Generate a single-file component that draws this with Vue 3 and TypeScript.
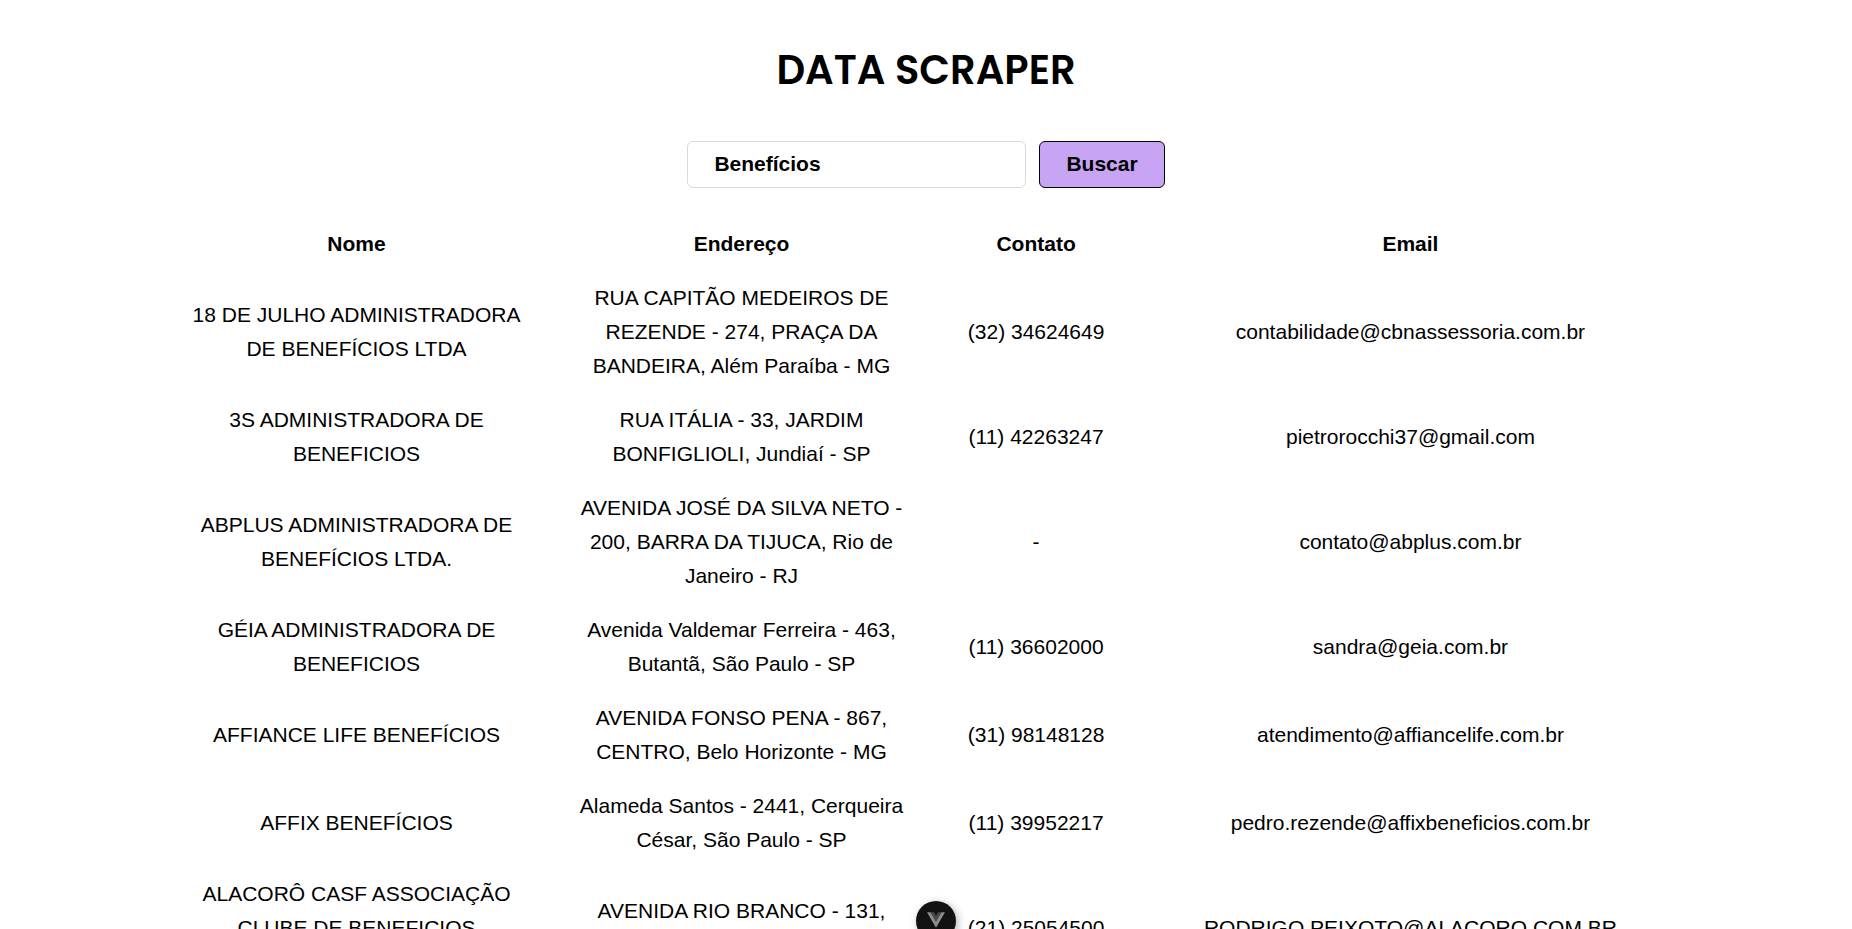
<script setup lang="ts">
import { ref } from 'vue'

interface Company {
  name: string
  address: string
  phone: string
  email: string
}

const query = ref('Benefícios')

const companies = ref<Company[]>([
  {
    name: '18 DE JULHO ADMINISTRADORA DE BENEFÍCIOS LTDA',
    address: 'RUA CAPITÃO MEDEIROS DE REZENDE - 274, PRAÇA DA BANDEIRA, Além Paraíba - MG',
    phone: '(32) 34624649',
    email: 'contabilidade@cbnassessoria.com.br',
  },
  {
    name: '3S ADMINISTRADORA DE BENEFICIOS',
    address: 'RUA ITÁLIA - 33, JARDIM BONFIGLIOLI, Jundiaí - SP',
    phone: '(11) 42263247',
    email: 'pietrorocchi37@gmail.com',
  },
  {
    name: 'ABPLUS ADMINISTRADORA DE BENEFÍCIOS LTDA.',
    address: 'AVENIDA JOSÉ DA SILVA NETO - 200, BARRA DA TIJUCA, Rio de Janeiro - RJ',
    phone: '-',
    email: 'contato@abplus.com.br',
  },
  {
    name: 'GÉIA ADMINISTRADORA DE BENEFICIOS',
    address: 'Avenida Valdemar Ferreira - 463, Butantã, São Paulo - SP',
    phone: '(11) 36602000',
    email: 'sandra@geia.com.br',
  },
  {
    name: 'AFFIANCE LIFE BENEFÍCIOS',
    address: 'AVENIDA FONSO PENA - 867, CENTRO, Belo Horizonte - MG',
    phone: '(31) 98148128',
    email: 'atendimento@affiancelife.com.br',
  },
  {
    name: 'AFFIX BENEFÍCIOS',
    address: 'Alameda Santos - 2441, Cerqueira César, São Paulo - SP',
    phone: '(11) 39952217',
    email: 'pedro.rezende@affixbeneficios.com.br',
  },
  {
    name: 'ALACORÔ CASF ASSOCIAÇÃO CLUBE DE BENEFICIOS COMPARTILHADOS',
    address: 'AVENIDA RIO BRANCO - 131, CENTRO, Rio de Janeiro - RJ',
    phone: '(21) 25054500',
    email: 'RODRIGO.PEIXOTO@ALACORO.COM.BR',
  },
])
</script>

<template>
  <main class="page">
    <h1 class="title">DATA SCRAPER</h1>

    <form class="search" @submit.prevent>
      <input v-model="query" class="search-input" type="text" aria-label="Buscar por nome" />
      <button class="search-button" type="submit">Buscar</button>
    </form>

    <table class="results">
      <colgroup>
        <col class="col-name" />
        <col class="col-address" />
        <col class="col-phone" />
        <col />
      </colgroup>
      <thead>
        <tr>
          <th scope="col">Nome</th>
          <th scope="col">Endereço</th>
          <th scope="col">Contato</th>
          <th scope="col">Email</th>
        </tr>
      </thead>
      <tbody>
        <tr v-for="company in companies" :key="company.name">
          <td>{{ company.name }}</td>
          <td>{{ company.address }}</td>
          <td>{{ company.phone }}</td>
          <td>{{ company.email }}</td>
        </tr>
      </tbody>
    </table>

    <button class="devtools" type="button" aria-label="Vue DevTools">
      <svg viewBox="0 0 256 221" width="18" height="16" aria-hidden="true">
        <path fill="#8c8c8c" d="m0 0 128 220.8L256 0h-51.2L128 132.48 50.56 0H0Z" />
        <path fill="#4a4a4a" d="M50.56 0 128 133.12 204.8 0h-47.36L128 51.2 97.92 0H50.56Z" />
      </svg>
    </button>
  </main>
</template>

<style>
body {
  margin: 0;
  background: #fff;
}
</style>

<style scoped>
.page {
  display: flex;
  flex-direction: column;
  align-items: center;
  padding: 40px 0;
  color: #000;
  font-family: Arial, "Liberation Sans", sans-serif;
  font-size: 21px;
  line-height: 34px;
}

.title {
  margin: 0 0 41px;
  font-family: Poppins, Inter, sans-serif;
  font-size: 40px;
  font-weight: 600;
  line-height: 60px;
}

.search {
  display: flex;
  gap: 13px;
  margin-bottom: 29px;
}

.search-input,
.search-button {
  box-sizing: border-box;
  height: 47px;
  padding: 0 26px 2px;
  border: 1px solid #d9d9d9;
  border-radius: 6px;
  color: #000;
  font-family: inherit;
  font-size: 21px;
  font-weight: 700;
}

.search-input {
  width: 339px;
  background: #fff;
}

.search-button {
  border-color: #000;
  background: #c8a5f4;
  cursor: pointer;
}

.results {
  width: 82%;
  table-layout: fixed;
  border-collapse: collapse;
  text-align: center;
}

.col-name {
  width: 25%;
}

.col-address {
  width: 25.7%;
}

.col-phone {
  width: 13.1%;
}

.results th,
.results td {
  padding: 10px 24px;
  vertical-align: middle;
}

.results th:nth-child(3),
.results td:nth-child(3) {
  padding: 10px;
}

.devtools {
  position: fixed;
  bottom: -12px;
  left: calc(50% - 10px);
  display: flex;
  align-items: center;
  justify-content: center;
  width: 40px;
  height: 40px;
  padding: 0 0 2px;
  border: 0;
  border-radius: 50%;
  background: #121212;
  box-shadow: 2px 2px 8px rgba(0, 0, 0, 0.3);
}
</style>
